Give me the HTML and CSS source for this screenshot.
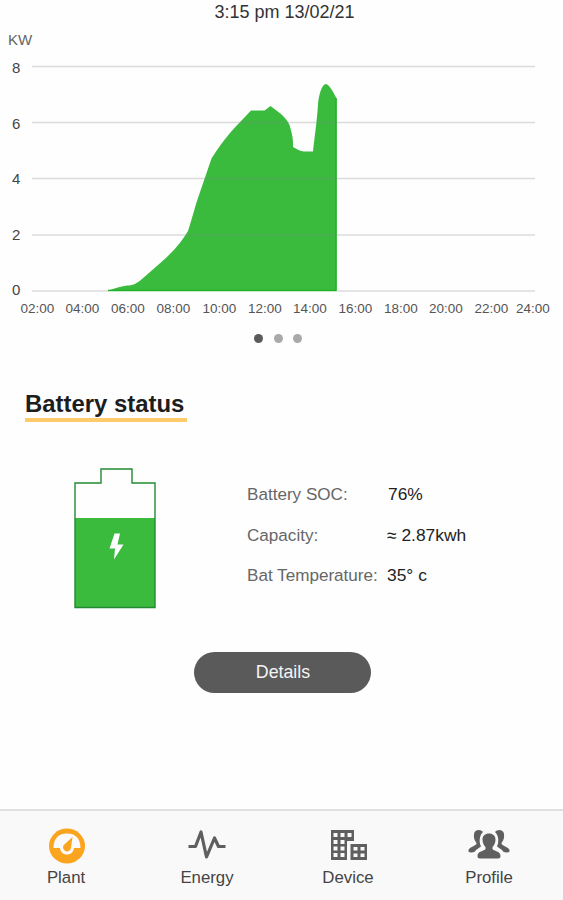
FILE: index.html
```html
<!DOCTYPE html>
<html lang="en">
<head>
  <meta charset="UTF-8">
  <title>Plant</title>
  <link rel="stylesheet" href="styles.css">
</head>
<body>
  <main class="content">
    <div class="chart-time">3:15 pm 13/02/21</div>

    <svg class="chart" width="563" height="300" viewBox="0 24 563 300">
      <path class="area" d="M108 290.5 C116 288 122 286 127 285.5 C134 285.5 137 283 142 279 L162 261.5 C174 251 182 241 188 231 C192 219 195 206 199 195 L211.5 158.5 C217 150 223 141 230 133 C236 126 244 118 251 110.5 L264.5 110.5 L270.5 106 L281 114 C285 118 288 121 289.5 125 C291 130 293 137 293 142 L293 147 C297 149 300 151.5 304 151.5 L313 151.5 C314 141 317 122 318 104 C319 94 322 84 326 84 C329 84 334 93 336.5 98.5 L336.5 290.5 Z"/>
      <path class="area-edge" d="M108 290.5 H336 V98"/>
      <g class="grid">
        <path d="M32 66.500H535M32 122.500H535M32 178.500H535M32 235H535"/>
        <path d="M32 291H108M337 291H535"/>
      </g>
      <g class="y-labels">
        <text class="unit" x="8" y="44.500">KW</text>
        <text x="12" y="73">8</text>
        <text x="12" y="129">6</text>
        <text x="12" y="184">4</text>
        <text x="12" y="240">2</text>
        <text x="12" y="295">0</text>
      </g>
      <g class="x-labels">
        <text x="37.500" y="313">02:00</text>
        <text x="82.500" y="313">04:00</text>
        <text x="128" y="313">06:00</text>
        <text x="173.500" y="313">08:00</text>
        <text x="219.500" y="313">10:00</text>
        <text x="265" y="313">12:00</text>
        <text x="310" y="313">14:00</text>
        <text x="355.500" y="313">16:00</text>
        <text x="401" y="313">18:00</text>
        <text x="446" y="313">20:00</text>
        <text x="491.500" y="313">22:00</text>
        <text x="533" y="313">24:00</text>
      </g>
    </svg>

    <div class="dots">
      <span class="dot active"></span>
      <span class="dot"></span>
      <span class="dot"></span>
    </div>

    <h2 class="section-title">Battery status</h2>

    <div class="battery">
      <svg class="battery-icon" width="83" height="141" viewBox="0 0 83 141">
        <path class="battery-level" d="M2 50H82V139.500H2Z"/>
        <path class="battery-outline" d="M2 15H28V1H59V15H82V139.500H2Z"/>
        <path class="bolt" d="M41.500 65.500H47L44.500 76.500H50.500L41 91.500L42 80.500H36.500Z"/>
      </svg>
      <dl class="battery-info">
        <dt>Battery SOC:</dt><dd class="soc">76%</dd>
        <dt>Capacity:</dt><dd><span class="approx">≈</span> 2.87kwh</dd>
        <dt>Bat Temperature:</dt><dd>35° c</dd>
      </dl>
    </div>

    <button class="details-btn">Details</button>
  </main>

  <nav class="tabbar">
    <a class="tab">
      <svg width="40" height="36" viewBox="0 0 40 36">
        <ellipse cx="21" cy="18" rx="18" ry="17.500" fill="#fba41e"/>
        <path d="M7.500 20C7.500 10 13 5.500 21 5.500S34.500 10 34.500 20H28C27.500 24 25 26.500 21 26.500S14.500 24 14 20Z" fill="#fafafa"/>
        <path d="M26.500 9L25 19.500A4 4 0 1 1 17.800 17Z" fill="#fba41e"/>
      </svg>
      <span>Plant</span>
    </a>
    <a class="tab">
      <svg width="40" height="36" viewBox="0 0 40 36">
        <path d="M1.500 18.500H8.500L14 4L19.500 29L27.500 10L31.500 18.500H38.500" fill="none" stroke="#5f5f5f" stroke-width="3.200" stroke-linejoin="round"/>
      </svg>
      <span>Energy</span>
    </a>
    <a class="tab">
      <svg width="40" height="36" viewBox="0 0 40 36">
        <path fill="#5f5f5f" fill-rule="evenodd" d="M3 2H26V13H19V32H3ZM5.500 5V9H9.500V5ZM12.500 5V9H16.500V5ZM19.500 5V9H23.500V5ZM5.500 12V16H9.500V12ZM12.500 12V16H16.500V12ZM5.500 18.500V22.500H9.500V18.500ZM12.500 18.500V22.500H16.500V18.500ZM5.500 25V29H9.500V25ZM12.500 25V29H16.500V25ZM22.500 16H39V32H22.500ZM25.500 19V22.500H29.500V19ZM32.500 19V22.500H36.500V19ZM25.500 25.500V29H29.500V25.500ZM32.500 25.500V29H36.500V25.500Z"/>
      </svg>
      <span>Device</span>
    </a>
    <a class="tab">
      <svg width="44" height="36" viewBox="0 0 44 36">
        <g fill="#5f5f5f">
          <path d="M16 4C14 1 7.500 1 7 6C6.500 10 7.500 12.500 9.500 15C10 17.500 3 18.500 1.500 22Q1 24.500 4 24.500Q8 24.500 9 22L14 18.500C12 14 12 8 16 4Z"/>
          <path d="M28 4C30 1 36.500 1 37 6C37.500 10 36.500 12.500 34.500 15C34 17.500 41 18.500 42.500 22Q43 24.500 40 24.500Q36 24.500 35 22L30 18.500C32 14 32 8 28 4Z"/>
          <path d="M22 5.500C26 5.500 28.500 8 28.500 11.500C28.500 15 27 17.500 25.500 19V21C26.500 23 33.500 23 33.500 28Q33.500 30.500 31 30.500H13Q10.500 30.500 10.500 28C10.500 23 17.500 23 18.500 21V19C17 17.500 15.500 15 15.500 11.500C15.500 8 18 5.500 22 5.500Z"/>
        </g>
      </svg>
      <span>Profile</span>
    </a>
  </nav>
</body>
</html>
```
FILE: styles.css
```css
* {
  margin: 0;
  padding: 0;
  box-sizing: border-box;
}

body {
  display: flex;
  flex-direction: column;
  height: 900px;
  overflow: hidden;
  background: #fefefe;
  font-family: "Liberation Sans", Arial, sans-serif;
  color: #333;
}

.content {
  flex: 1;
}

.chart-time {
  height: 24px;
  padding-left: 6px;
  font-size: 18px;
  line-height: 24px;
  text-align: center;
}

.chart {
  display: block;
}

.area {
  fill: #3abb3e;
}

.area-edge {
  fill: none;
  stroke: #22b12b;
  stroke-width: 1.5;
}

.grid {
  stroke: rgba(130, 130, 130, 0.28);
  stroke-width: 1.3;
}

.y-labels {
  font-size: 15px;
  fill: #444;
}

.y-labels .unit {
  fill: #666;
}

.x-labels {
  font-size: 13.5px;
  text-anchor: middle;
  fill: #555;
}

.dots {
  display: flex;
  justify-content: center;
  gap: 10.5px;
  height: 9px;
  margin-top: 9.5px;
  padding-right: 7px;
}

.dot {
  width: 9px;
  height: 9px;
  border-radius: 50%;
  background: #aaa8a8;
}

.dot.active {
  background: #5c5a5a;
}

.section-title {
  width: 162px;
  height: 34px;
  margin: 45.5px 0 0 25px;
  border-bottom: 4px solid #fdcb6c;
  font-size: 23.9px;
  line-height: 31px;
  white-space: nowrap;
  color: #1d1d1d;
}

.battery {
  display: flex;
  margin: 46px 0 0 73px;
}

.battery-level {
  fill: #3abb3e;
}

.battery-outline {
  fill: none;
  stroke: #238a32;
  stroke-width: 1.4;
}

.bolt {
  fill: #fff;
}

.battery-info {
  display: grid;
  grid-template-columns: 140px auto;
  grid-auto-rows: 40.5px;
  margin: 6px 0 0 91px;
  font-size: 17.1px;
  line-height: 41px;
}

.battery-info dt {
  color: #666;
}

.battery-info dd {
  font-size: 17.4px;
  line-height: 40px;
  color: #222;
}

.battery-info .soc {
  padding-left: 1px;
}

.approx {
  display: inline-block;
  transform: scaleY(1.1);
}

.details-btn {
  display: block;
  width: 177px;
  height: 41px;
  margin: 43px 0 0 194px;
  padding: 0 0 0 1px;
  border: 0;
  border-radius: 21px;
  background: #5a5a5a;
  color: #f4f4f4;
  font-family: inherit;
  font-size: 17.8px;
}

.tabbar {
  display: flex;
  gap: 31px;
  height: 91px;
  padding: 17px 0 0 11px;
  border-top: 2px solid #e0e0e0;
  background: #f9f9f9;
}

.tab {
  display: flex;
  flex-direction: column;
  align-items: center;
  width: 110px;
  font-size: 16.8px;
  line-height: 27px;
  color: #444;
}
```
